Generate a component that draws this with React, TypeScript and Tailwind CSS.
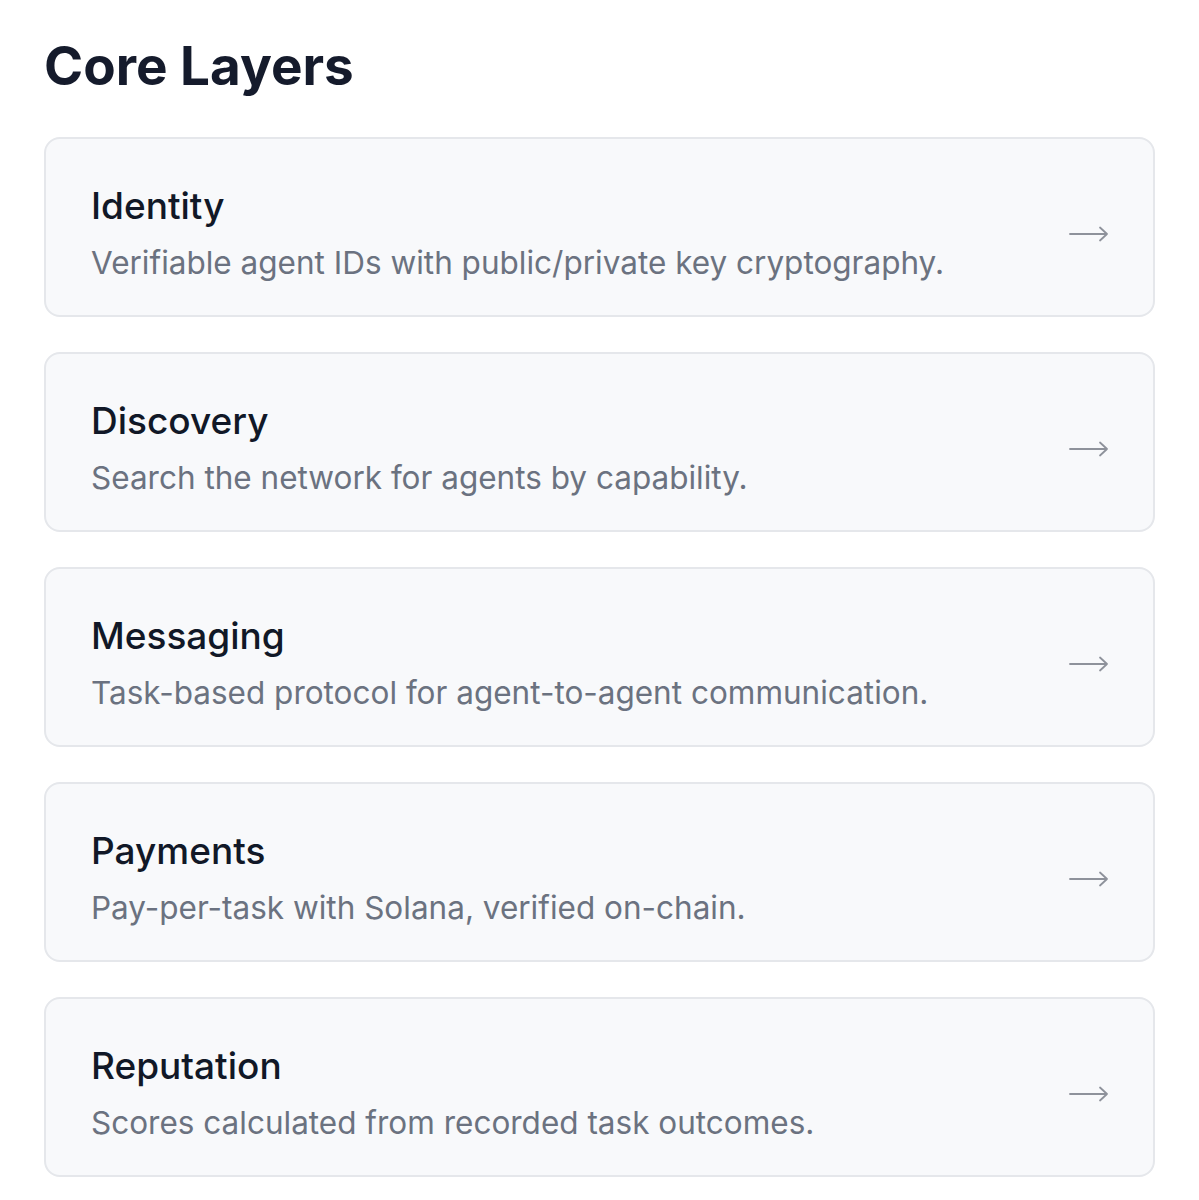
const layers = [
  { name: "Identity", text: "Verifiable agent IDs with public/private key cryptography." },
  { name: "Discovery", text: "Search the network for agents by capability." },
  { name: "Messaging", text: "Task-based protocol for agent-to-agent communication." },
  { name: "Payments", text: "Pay-per-task with Solana, verified on-chain." },
  { name: "Reputation", text: "Scores calculated from recorded task outcomes." },
];

function ArrowRight() {
  return (
    <svg width="40" height="16" viewBox="0 0 40 16" fill="none" className="text-[#8e929b]">
      <path d="M1 8h37M31 1.5L38 8l-7 6.5" stroke="currentColor" strokeWidth="1.8" strokeLinecap="round" strokeLinejoin="round" />
    </svg>
  );
}

function LayerCard({ name, text }: { name: string; text: string }) {
  return (
    <div className="flex h-[180px] justify-between rounded-2xl border-2 border-[#e5e7eb] bg-[#f8f9fb] pl-[45px] pr-[44px] pt-[45px]">
      <div className="flex flex-col gap-[15px]">
        <h3 className="text-[37px] font-medium leading-[44px] text-[#111827]">{name}</h3>
        <p className="text-[31.5px] leading-[40px] text-[#6b7280]">{text}</p>
      </div>
      <div className="pt-[42px]">
        <ArrowRight />
      </div>
    </div>
  );
}

export default function App() {
  return (
    <div className="min-h-screen bg-white px-[44px] pt-[34px] font-['Inter',sans-serif]">
      <h2 className="text-[53px] font-bold leading-[64px] text-[#151b2c]">Core Layers</h2>
      <div className="mt-[39px] flex flex-col gap-[35px]">
        {layers.map((l) => (
          <LayerCard key={l.name} {...l} />
        ))}
      </div>
    </div>
  );
}
